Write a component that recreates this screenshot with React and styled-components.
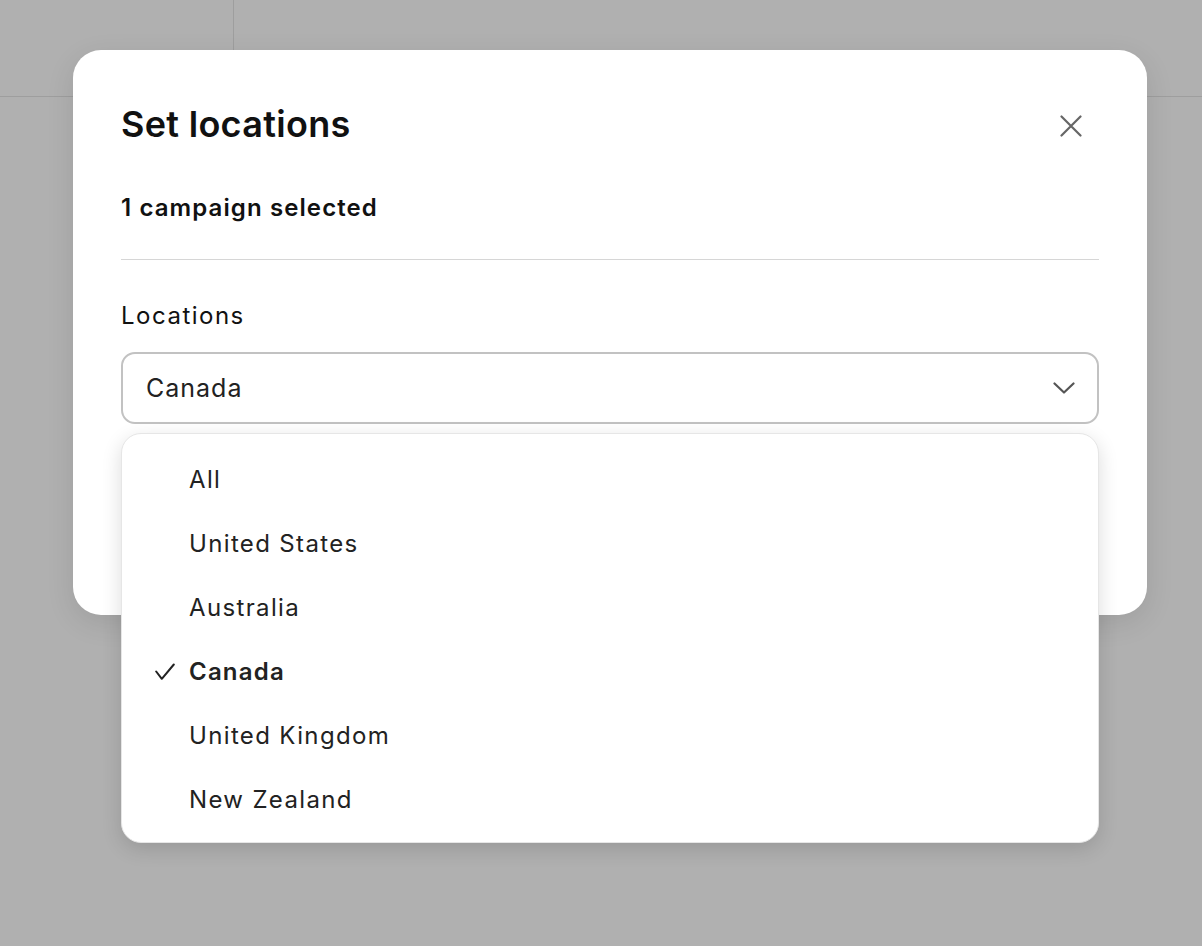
import React from "react";
import styled, { createGlobalStyle } from "styled-components";

const Global = createGlobalStyle`
  html, body { margin: 0; padding: 0; }
  body {
    font-family: Inter, "Noto Sans", sans-serif;
    background: #b0b0b0;
    color: #222;
  }
  * { box-sizing: border-box; }
`;

const Page = styled.div`
  position: relative;
  width: 1202px;
  height: 946px;
  background: #b0b0b0;
  overflow: hidden;
`;

const TopBar = styled.div`
  height: 97px;
  display: flex;
  border-bottom: 1px solid #9e9e9e;
`;

const SideCell = styled.div`
  width: 234px;
  border-right: 1px solid #9e9e9e;
`;

const Modal = styled.div`
  position: absolute;
  left: 73px;
  top: 50px;
  width: 1074px;
  height: 565px;
  background: #fff;
  border-radius: 28px;
  padding: 52px 48px 0 48px;
  box-shadow: 0 8px 28px rgba(0, 0, 0, 0.1);
`;

const Header = styled.div`
  display: flex;
  align-items: flex-start;
  justify-content: space-between;
`;

const Title = styled.h1`
  margin: 0;
  font-size: 36px;
  line-height: 44px;
  font-weight: 600;
  letter-spacing: 0.3px;
  color: #111;
`;

const CloseButton = styled.button`
  border: none;
  background: none;
  padding: 0;
  margin: 13px 17px 0 0;
  width: 22px;
  height: 22px;
  display: flex;
  align-items: center;
  justify-content: center;
  cursor: pointer;
`;

const Subtitle = styled.div`
  margin-top: 46px;
  font-size: 24px;
  line-height: 32px;
  font-weight: 600;
  letter-spacing: 1.1px;
  color: #111;
`;

const Divider = styled.hr`
  margin: 35px 0 0 0;
  border: none;
  border-top: 1px solid #d6d6d6;
`;

const Label = styled.div`
  margin-top: 40px;
  font-size: 24px;
  line-height: 32px;
  font-weight: 400;
  letter-spacing: 1.5px;
  color: #111;
`;

const SelectWrap = styled.div`
  position: relative;
  margin-top: 20px;
`;

const SelectBox = styled.div`
  height: 72px;
  border: 2px solid #c2c2c2;
  border-radius: 14px;
  display: flex;
  align-items: center;
  justify-content: space-between;
  padding: 0 22px 0 23px;
  font-size: 25px;
  color: #222;
  letter-spacing: 1px;
`;

const Menu = styled.ul`
  position: absolute;
  left: 0;
  right: 0;
  top: 81px;
  margin: 0;
  padding: 14px 0 10px;
  list-style: none;
  background: #fff;
  border: 1px solid #e6e6e6;
  border-radius: 20px;
  box-shadow: 0 6px 20px rgba(0, 0, 0, 0.14);
`;

const Item = styled.li`
  height: 64px;
  display: flex;
  align-items: center;
  font-size: 24px;
  line-height: 32px;
  letter-spacing: ${(p) => (p.$selected ? "1.2px" : "1.35px")};
  color: #222;
  font-weight: ${(p) => (p.$selected ? 600 : 400)};
`;

const CheckSlot = styled.span`
  width: 67px;
  flex: none;
  display: flex;
  justify-content: flex-end;
  padding-right: 14px;
`;

const options = [
  "All",
  "United States",
  "Australia",
  "Canada",
  "United Kingdom",
  "New Zealand",
];

export default function App() {
  const selected = "Canada";
  return (
    <>
      <Global />
      <Page>
        <TopBar>
          <SideCell />
        </TopBar>
        <Modal>
          <Header>
            <Title>Set locations</Title>
            <CloseButton aria-label="Close">
              <svg width="22" height="22" viewBox="0 0 22 22">
                <path
                  d="M1.5 1.5L20.5 20.5M20.5 1.5L1.5 20.5"
                  stroke="#666"
                  strokeWidth="2.2"
                  strokeLinecap="round"
                />
              </svg>
            </CloseButton>
          </Header>
          <Subtitle>1 campaign selected</Subtitle>
          <Divider />
          <Label>Locations</Label>
          <SelectWrap>
            <SelectBox>
              <span>{selected}</span>
              <svg width="22" height="12" viewBox="0 0 22 12">
                <path
                  d="M1.5 1.5L11 10.5L20.5 1.5"
                  fill="none"
                  stroke="#555"
                  strokeWidth="2.2"
                  strokeLinecap="round"
                  strokeLinejoin="round"
                />
              </svg>
            </SelectBox>
            <Menu>
              {options.map((o) => (
                <Item key={o} $selected={o === selected}>
                  <CheckSlot>
                    {o === selected && (
                      <svg width="20" height="18" viewBox="0 0 20 18">
                        <path
                          d="M1.2 8.5L6.8 15.8L18.8 1.5"
                          fill="none"
                          stroke="#222"
                          strokeWidth="2"
                          strokeLinecap="round"
                          strokeLinejoin="round"
                        />
                      </svg>
                    )}
                  </CheckSlot>
                  {o}
                </Item>
              ))}
            </Menu>
          </SelectWrap>
        </Modal>
      </Page>
    </>
  );
}
